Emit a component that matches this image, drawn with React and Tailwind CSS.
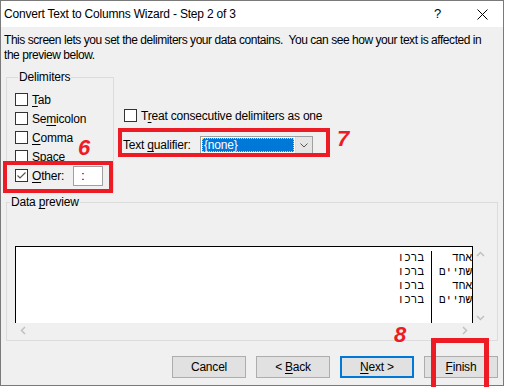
import React from "react";

const ui = { fontFamily: '"Liberation Sans", Arial, sans-serif' };

function Box({ checked }) {
  return (
    <span className="w-[13px] h-[13px] border border-[#333] bg-white shrink-0 flex items-center justify-center">
      {checked && (
        <svg width="11" height="11" viewBox="0 0 11 11">
          <path d="M1.5 5.5 L4 8 L9.5 2.5" fill="none" stroke="#555" strokeWidth="1.2" />
        </svg>
      )}
    </span>
  );
}

function Check({ label, u, checked, children }) {
  const i = u ? label.indexOf(u) : -1;
  return (
    <div className="h-[19px] flex items-center">
      <Box checked={checked} />
      {i < 0 ? (
        <span className="ml-[4px]">{label}</span>
      ) : (
        <span className="ml-[4px]">
          {label.slice(0, i)}
          <span className="underline underline-offset-2">{u}</span>
          {label.slice(i + 1)}
        </span>
      )}
      {children}
    </div>
  );
}

function Btn({ children, focus }) {
  return (
    <div
      className={
        "w-[74px] h-[22px] flex items-center justify-center bg-[#e1e1e1] " +
        (focus ? "border-2 border-[#0078d7]" : "border border-[#adadad]")
      }
    >
      {children}
    </div>
  );
}

const rows = [
  ["ברכו", "אחד"],
  ["ברכו", "שתיים"],
  ["ברכו", "אחד"],
  ["ברכו", "שתיים"],
];

export default function App() {
  return (
    <div className="relative w-[506px] h-[387px] bg-white overflow-hidden text-[12px] tracking-[-0.2px] text-black" style={ui}>
      <div className="w-[504px] h-[386px] border border-[#7a7a7a] flex flex-col">
        {/* title bar */}
        <div className="h-[26px] bg-white flex items-center pl-[3px] shrink-0">
          <span>Convert Text to Columns Wizard - Step 2 of 3</span>
          <span className="ml-auto mr-[36px] text-[13px]">?</span>
          <svg width="11" height="11" viewBox="0 0 11 11" className="mr-[15px]">
            <path d="M0.5 0.5 L10.5 10.5 M10.5 0.5 L0.5 10.5" stroke="#000" strokeWidth="1" />
          </svg>
        </div>

        {/* body */}
        <div className="flex-1 bg-[#f0f0f0] flex flex-col">
          <p className="pt-[6px] px-[3px] leading-[15px] tracking-[-0.45px] whitespace-nowrap">
            This screen lets you set the delimiters your data contains.&nbsp; You can see how your text is affected in
            <br />
            the preview below.
          </p>

          <div className="flex mt-[7px]">
            <fieldset className="ml-[5px] w-[108px] h-[122px] border border-[#dcdcdc] pl-[8px] pt-[5px] m-0">
              <legend className="px-[1px] ml-[3px] leading-[15px]">Delimiters</legend>
              <Check label="Tab" u="T" />
              <Check label="Semicolon" u="m" />
              <Check label="Comma" u="C" />
              <Check label="Space" />
              <Check label="Other:" u="O" checked>
                <div className="ml-[9px] w-[30px] h-[20px] border border-[#a0a0a0] bg-white pl-[7px] leading-[18px]">:</div>
              </Check>
            </fieldset>

            <div className="ml-[10px] flex flex-col pt-[36px]">
              <div className="flex items-center h-[19px]">
                <Box />
                <span className="ml-[4px]">
                  T<span className="underline underline-offset-2">r</span>eat consecutive delimiters as one
                </span>
              </div>
              <div className="flex items-center mt-[11px]">
                <span className="w-[77px] -ml-[1px]">
                  Text <span className="underline underline-offset-2">q</span>ualifier:
                </span>
                <div className="w-[113px] h-[18px] border border-[#a0a0a0] bg-white flex">
                  <div className="flex-1 m-[1px] bg-[#0078d7] text-white outline-1 outline-dotted outline-[#ffd24d] -outline-offset-1 pl-[2px] leading-[14px]">
                    {"{none}"}
                  </div>
                  <div className="w-[17px] bg-[#e5e5e5] border-l border-[#dcdcdc] flex items-center justify-center">
                    <svg width="8" height="5" viewBox="0 0 8 5">
                      <path d="M0.5 0.5 L4 4 L7.5 0.5" fill="none" stroke="#555" />
                    </svg>
                  </div>
                </div>
              </div>
            </div>
          </div>

          {/* data preview */}
          <fieldset className="mt-[3px] ml-[5px] w-[492px] h-[146px] border border-[#dcdcdc] m-0 p-0">
            <legend className="ml-[3px] px-[1px] leading-[15px]">
              Data <span className="underline underline-offset-2">p</span>review
            </legend>
            <div className="mt-[36px] ml-[8px] flex">
              <div className="w-[458px] h-[77px] bg-white border-t border-l border-r border-black flex font-['Liberation_Mono',monospace] tracking-normal text-[11px] leading-[14px] pt-[4px]">
                <div className="w-[416px] border-r border-black pr-[7px] flex flex-col items-end">
                  {rows.map((r, i) => (
                    <span key={i}>{r[0]}</span>
                  ))}
                </div>
                <div className="flex-1 overflow-hidden flex flex-col items-end">
                  {rows.map((r, i) => (
                    <span key={i} className="whitespace-nowrap">{r[1]}</span>
                  ))}
                </div>
              </div>
              <div className="w-[15px] h-[77px] flex flex-col items-center justify-between pt-[5px] pb-[2px]">
                <svg width="9" height="6" viewBox="0 0 9 6"><path d="M1 5 L4.5 1.5 L8 5" fill="none" stroke="#c0c0c0" strokeWidth="1.5" /></svg>
                <svg width="9" height="6" viewBox="0 0 9 6"><path d="M1 1 L4.5 4.5 L8 1" fill="none" stroke="#c0c0c0" strokeWidth="1.5" /></svg>
              </div>
            </div>
            <div className="ml-[8px] w-[458px] h-[15px] flex items-center justify-between px-[5px]">
              <svg width="6" height="9" viewBox="0 0 6 9"><path d="M5 1 L1.5 4.5 L5 8" fill="none" stroke="#c0c0c0" strokeWidth="1.5" /></svg>
              <svg width="6" height="9" viewBox="0 0 6 9"><path d="M1 1 L4.5 4.5 L1 8" fill="none" stroke="#c0c0c0" strokeWidth="1.5" /></svg>
            </div>
          </fieldset>

          <div className="flex justify-end gap-[10px] mt-[15px] mr-[5px]">
            <Btn>Cancel</Btn>
            <Btn>
              &lt; <span className="underline underline-offset-2 ml-[3px]">B</span>ack
            </Btn>
            <Btn focus>
              <span className="underline underline-offset-2">N</span>ext &gt;
            </Btn>
            <Btn>
              <span className="underline underline-offset-2">F</span>inish
            </Btn>
          </div>
        </div>
      </div>

      {/* annotations */}
      <div className="absolute left-[3px] top-[161px] w-[110px] h-[32px] border-4 border-[#ed1c24]" />
      <div className="absolute left-[118px] top-[128px] w-[212px] h-[29px] border-4 border-[#ed1c24]" />
      <div className="absolute left-[431px] top-[338px] w-[58px] h-[60px] border-[5px] border-[#ed1c24]" />
      <span className="absolute left-[78px] top-[136px] text-[22px] leading-[24px] font-bold italic text-[#ed1c24]">6</span>
      <span className="absolute left-[337px] top-[127px] text-[22px] leading-[24px] font-bold italic text-[#ed1c24]">7</span>
      <span className="absolute left-[394px] top-[323px] text-[22px] leading-[24px] font-bold italic text-[#ed1c24]">8</span>
    </div>
  );
}
